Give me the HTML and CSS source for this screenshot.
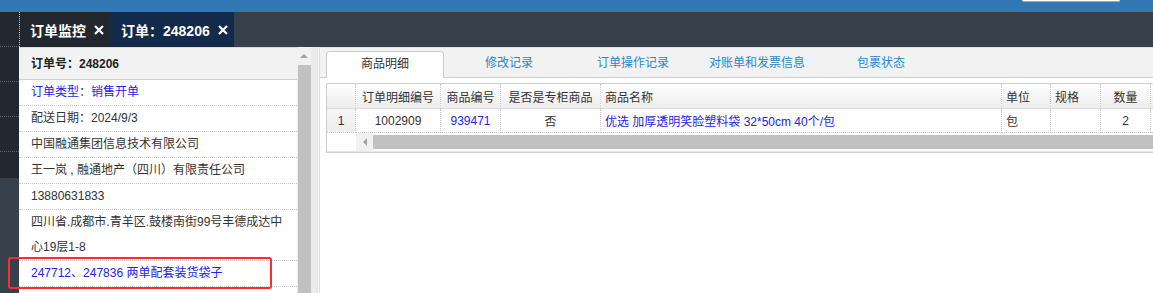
FILE: index.html
```html
<!DOCTYPE html>
<html lang="zh-CN">
<head>
  <meta charset="UTF-8">
  <title>订单：248206</title>
  <link rel="stylesheet" href="styles.css">
</head>
<body>
  <div class="topbar"><div class="search-box"></div></div>
  <div class="main">
    <div class="sidenav">
      <div class="nav-item"></div>
      <div class="nav-item"></div>
      <div class="nav-item"></div>
      <div class="nav-item"></div>
      <div class="nav-last"></div>
    </div>
    <div class="workspace">
      <div class="tabbar">
        <div class="tab">订单监控<svg class="close" width="10" height="10" viewBox="0 0 10 10"><path d="M1 1L9 9M9 1L1 9"/></svg></div>
        <div class="tab active">订单：248206<svg class="close" width="10" height="10" viewBox="0 0 10 10"><path d="M1 1L9 9M9 1L1 9"/></svg></div>
      </div>
      <div class="page">
        <div class="info">
          <div class="info-list">
            <div class="info-head">订单号：248206</div>
            <div class="info-row link">订单类型：销售开单</div>
            <div class="info-row">配送日期：2024/9/3</div>
            <div class="info-row">中国融通集团信息技术有限公司</div>
            <div class="info-row">王一岚 , 融通地产（四川）有限责任公司</div>
            <div class="info-row">13880631833</div>
            <div class="info-row">四川省.成都市.青羊区.鼓楼南街99号丰德成达中心19层1-8</div>
            <div class="info-row link">247712、247836 两单配套装货袋子</div>
          </div>
          <div class="vscroll">
            <div class="arrow-up"></div>
            <div class="thumb"></div>
          </div>
        </div>
        <div class="detail">
          <div class="detail-tabs">
            <div class="dtab active">商品明细</div>
            <div class="dtab">修改记录</div>
            <div class="dtab">订单操作记录</div>
            <div class="dtab">对账单和发票信息</div>
            <div class="dtab">包裹状态</div>
          </div>
          <div class="grid">
            <table>
              <thead>
                <tr>
                  <th class="rownum"></th>
                  <th class="c-no">订单明细编号</th>
                  <th class="c-code">商品编号</th>
                  <th class="c-flag">是否是专柜商品</th>
                  <th class="c-name left">商品名称</th>
                  <th class="c-unit left">单位</th>
                  <th class="c-spec left">规格</th>
                  <th class="c-qty">数量</th>
                  <th class="c-more"></th>
                </tr>
              </thead>
              <tbody>
                <tr>
                  <td class="rownum">1</td>
                  <td>1002909</td>
                  <td class="link">939471</td>
                  <td>否</td>
                  <td class="left link">优选 加厚透明笑脸塑料袋 32*50cm 40个/包</td>
                  <td class="left">包</td>
                  <td></td>
                  <td>2</td>
                  <td></td>
                </tr>
              </tbody>
            </table>
            <div class="hscroll">
              <div class="hs-blank"></div>
              <div class="hs-btn"><span class="arrow-left"></span></div>
              <div class="hs-thumb"></div>
            </div>
          </div>
        </div>
      </div>
    </div>
  </div>
  <div class="mark"></div>
</body>
</html>
```

FILE: styles.css
```css
html, body {
  margin: 0;
  padding: 0;
}

body {
  width: 1153px;
  height: 293px;
  overflow: hidden;
  font-family: "Liberation Sans", "Noto Sans CJK SC", sans-serif;
  font-size: 12px;
  color: #333;
  background: #fff;
  position: relative;
}

.topbar {
  height: 12px;
  background: #3278b5;
  display: flex;
  justify-content: flex-end;
}

.search-box {
  width: 98px;
  height: 1px;
  margin-right: 33px;
  background: #fff;
  border-bottom: 1px solid #9aa6b2;
  border-radius: 0 0 3px 3px;
}

.main {
  display: flex;
  height: 281px;
}

.sidenav {
  width: 19px;
  flex: none;
  background: #36414b;
  display: flex;
  flex-direction: column;
}

.nav-item {
  height: 35px;
  box-sizing: border-box;
  background: #22282e;
  border-bottom: 1px dotted #5d646c;
}

.nav-last {
  height: 26px;
  background: #22282e;
}

.workspace {
  flex: 1;
  display: flex;
  flex-direction: column;
  min-width: 0;
}

.tabbar {
  height: 35px;
  background: #36414b;
  display: flex;
}

.tab {
  display: flex;
  align-items: center;
  width: 80px;
  padding: 0 0 0 10px;
  background: #22272d;
  border-left: 1px dotted #c9ccd0;
  color: #fff;
  font-size: 14px;
  font-weight: bold;
}

.tab.active {
  background: #132a4b;
  border-left: none;
  padding-left: 11px;
  width: 113px;
}

.close {
  margin-left: 8px;
  stroke: #fff;
  stroke-width: 2.2;
  fill: none;
}

.page {
  flex: 1;
  display: flex;
  min-height: 0;
}

/* left info panel */
.info {
  display: flex;
  width: 299px;
  flex: none;
}

.info-list {
  width: 278px;
  background: #fff;
}

.info-head {
  height: 31px;
  line-height: 32px;
  padding: 0 12px;
  background: #f2f2f2;
  border-top: 1px solid #dcdcdc;
  border-bottom: 1px solid #cfcfcf;
  font-weight: bold;
  color: #222;
}

.info-row {
  line-height: 25px;
  padding: 0 12px;
  border-bottom: 1px dotted #c8c8c8;
}

.link {
  color: #2323e6;
}

.vscroll {
  width: 20px;
  background: #ececec;
  border-right: 1px solid #dedede;
  display: flex;
  flex-direction: column;
}

.arrow-up {
  height: 18px;
  width: 14px;
  background: #f1f1f1;
  position: relative;
}

.arrow-up::after {
  content: "";
  position: absolute;
  left: 3px;
  top: 7px;
  border-left: 4px solid transparent;
  border-right: 4px solid transparent;
  border-bottom: 4px solid #a3a3a3;
}

.thumb {
  flex: 1;
  width: 13px;
  margin-left: 1px;
  background: #c1c1c1;
}

/* right detail panel */
.detail {
  flex: 1;
  min-width: 0;
  overflow: hidden;
  border-left: 1px solid #dadada;
  margin-left: 1px;
}

.detail-tabs {
  height: 29px;
  display: flex;
  align-items: flex-end;
  padding-left: 6px;
  background: #f2f2f2;
  border-top: 1px solid #e2e2e2;
  border-bottom: 1px solid #cdcdcd;
}

.dtab {
  width: 118px;
  margin-right: 6px;
  height: 26px;
  line-height: 24px;
  text-align: center;
  color: #2a88cc;
  box-sizing: border-box;
}

.dtab.active {
  background: #fff;
  color: #333;
  border: 1px solid #cdcdcd;
  border-bottom: none;
  border-radius: 4px 4px 0 0;
  height: 27px;
  margin-bottom: -1px;
}

.grid {
  margin: 5px 0 0 6px;
  border: 1px solid #cfcfcf;
  border-right: none;
  width: 900px;
}

table {
  border-collapse: collapse;
  table-layout: fixed;
  width: 900px;
}

th, td {
  padding: 0 4px;
  text-align: center;
  white-space: nowrap;
  overflow: hidden;
  border-right: 1px dotted #c8c8c8;
}

th {
  height: 24px;
  font-weight: normal;
  background: linear-gradient(#ffffff, #ececec);
  border-bottom: 1px solid #dcdcdc;
}

td {
  height: 23px;
  border-bottom: 1px dotted #c8c8c8;
}

.left {
  text-align: left;
}

td.rownum {
  background: linear-gradient(#f7f7f7, #ececec);
}

.rownum { width: 20px; }
.c-no { width: 76px; }
.c-code { width: 51px; }
.c-flag { width: 91px; }
.c-name { width: 392px; }
.c-unit { width: 40px; }
.c-spec { width: 41px; }
.c-qty { width: 41px; }

.hscroll {
  display: flex;
  height: 18px;
  border-bottom: 1px solid #e6e6e6;
}

.hs-blank {
  width: 29px;
  background: #fff;
}

.hs-btn {
  width: 17px;
  background: #f1f1f1;
  display: flex;
  align-items: center;
  justify-content: center;
}

.arrow-left {
  border-top: 4px solid transparent;
  border-bottom: 4px solid transparent;
  border-right: 4px solid #a3a3a3;
}

.hs-thumb {
  flex: 1;
  margin: 2px 0;
  background: #c1c1c1;
}

/* annotation */
.mark {
  position: absolute;
  left: 8px;
  top: 257px;
  width: 260px;
  height: 28px;
  border: 2px solid #ff2a2a;
  border-radius: 3px;
}
```
